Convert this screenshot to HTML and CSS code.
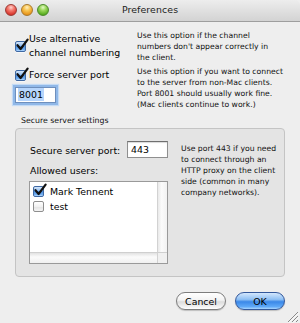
FILE: index.html
```html
<!DOCTYPE html>
<html>
<head>
<meta charset="utf-8">
<title>Preferences</title>
<link rel="stylesheet" href="styles.css">
</head>
<body>
<div class="window">
  <div class="titlebar">
    <div class="lights">
      <span class="light red"></span>
      <span class="light yellow"></span>
      <span class="light green"></span>
    </div>
    <div class="title">Preferences</div>
    <div class="spacer"></div>
  </div>

  <div class="content">
    <div class="option">
      <div class="check-label multi">
        <span class="cb checked"><svg class="tick" viewBox="0 0 14 14" width="14" height="14"><path d="M2.5 7.2 L5.6 11 L12.6 1.6" fill="none" stroke="#111" stroke-width="2.2" stroke-linecap="round" stroke-linejoin="round"/></svg></span>
        <span class="label">Use alternative<br>channel numbering</span>
      </div>
      <p class="desc">Use this option if the channel<br>numbers don't appear correctly in<br>the client.</p>
    </div>

    <div class="option option2">
      <div class="left">
        <div class="check-label">
          <span class="cb checked"><svg class="tick" viewBox="0 0 14 14" width="14" height="14"><path d="M2.5 7.2 L5.6 11 L12.6 1.6" fill="none" stroke="#111" stroke-width="2.2" stroke-linecap="round" stroke-linejoin="round"/></svg></span>
          <span class="label">Force server port</span>
        </div>
        <div class="field focused"><span class="sel">8001</span></div>
      </div>
      <p class="desc desc2">Use this option if you want to connect<br>to the server from non-Mac clients.<br>Port 8001 should usually work fine.<br>(Mac clients continue to work.)</p>
    </div>

    <div class="group-label">Secure server settings</div>
    <div class="group">
      <div class="group-left">
        <div class="port-row">
          <span class="port-label">Secure server port:</span>
          <div class="field port">443</div>
        </div>
        <div class="users-label">Allowed users:</div>
        <div class="list">
          <div class="list-body">
            <div class="item">
              <span class="cb checked"><svg class="tick" viewBox="0 0 14 14" width="14" height="14"><path d="M2.5 7.2 L5.6 11 L12.6 1.6" fill="none" stroke="#111" stroke-width="2.2" stroke-linecap="round" stroke-linejoin="round"/></svg></span>
              <span>Mark Tennent</span>
            </div>
            <div class="item">
              <span class="cb"></span>
              <span>test</span>
            </div>
          </div>
          <div class="vscroll"></div>
          <div class="hscroll"></div>
          <div class="corner"></div>
        </div>
      </div>
      <p class="desc group-desc">Use port 443 if you need<br>to connect through an<br>HTTP proxy on the client<br>side (common in many<br>company networks).</p>
    </div>

    <div class="buttons">
      <button class="btn">Cancel</button>
      <button class="btn default">OK</button>
    </div>
  </div>

  <svg class="grip" viewBox="0 0 14 14" width="14" height="14">
    <path d="M13 3 L3 13 M13 7 L7 13 M13 11 L11 13" stroke="#8a8a8a" stroke-width="1"/>
    <path d="M13.8 3.8 L3.8 13.8 M13.8 7.8 L7.8 13.8" stroke="#ffffff" stroke-width="0.8"/>
  </svg>
</div>
</body>
</html>
```

FILE: styles.css
```css
* { box-sizing: border-box; }

html, body {
  margin: 0;
  padding: 0;
}

body {
  width: 300px;
  height: 323px;
  background: #eeeeee;
  font-family: "DejaVu Sans", "Liberation Sans", sans-serif;
  color: #000;
  overflow: hidden;
}

.window {
  position: relative;
  width: 300px;
  height: 323px;
  background: #eeeeee;
}

/* Title bar */
.titlebar {
  height: 22px;
  display: grid;
  grid-template-columns: 1fr auto 1fr;
  align-items: center;
  background: linear-gradient(#ededed, #e0e0e0 50%, #d3d3d3);
  border-bottom: 1px solid #9e9e9e;
  border-radius: 5px 5px 0 0;
}

.lights {
  display: flex;
  gap: 4px;
  padding-left: 5px;
  margin-top: -2px;
}

.light {
  width: 12px;
  height: 12px;
  border-radius: 50%;
  display: block;
}

.light.red {
  background: radial-gradient(circle at 50% 25%, #ffd2cc 0, #f47a6f 35%, #d9392f 75%, #b42a22 100%);
  border: 1px solid #9c3b35;
}
.light.yellow {
  background: radial-gradient(circle at 50% 25%, #fff0c4 0, #f8c552 35%, #e8961d 75%, #c97a10 100%);
  border: 1px solid #a8792e;
}
.light.green {
  background: radial-gradient(circle at 50% 25%, #e4f9c8 0, #9ad75a 35%, #5bae22 75%, #3f8d14 100%);
  border: 1px solid #4c8a2c;
}

.title {
  font-size: 9.4px;
  color: #222;
  margin-top: -2px;
  letter-spacing: 0.1px;
}

/* Content */
.content {
  padding: 0 15px;
}

.option {
  display: grid;
  grid-template-columns: 122px 1fr;
  margin-top: 7px;
}

.option2 {
  margin-top: 0;
}

.option2 .left {
  padding-top: 5px;
}

.check-label {
  display: flex;
  align-items: flex-start;
  gap: 3px;
}

.check-label.multi {
  align-items: center;
}

.check-label.multi .cb {
  margin-top: 0;
}

.label {
  font-size: 9.4px;
  line-height: 14px;
}

.cb {
  position: relative;
  flex: none;
  width: 11px;
  height: 11px;
  margin-top: 2px;
  border: 1px solid #8e8e8e;
  border-radius: 2px;
  background: linear-gradient(#ffffff, #f1f1f1 50%, #e2e2e2 51%, #f4f4f4);
  box-shadow: 0 1px 0 rgba(255,255,255,0.6);
}

.cb.checked {
  border-color: #3f69a3;
  background: linear-gradient(#d5e6fb, #8cbcf1 45%, #4e92e4 50%, #74b0f2 85%, #b9dcff);
}

.tick {
  position: absolute;
  left: -1px;
  top: -4px;
}

.desc {
  margin: 0;
  font-size: 7.7px;
  line-height: 11px;
  color: #111;
  padding-top: 1px;
  white-space: nowrap;
}

.desc2 {
  padding-top: 3px;
}

/* Fields */
.field {
  width: 41px;
  height: 16px;
  background: #fff;
  border: 1px solid #8f8f8f;
  border-top-color: #6f6f6f;
  box-shadow: inset 0 1px 1px rgba(0,0,0,0.15);
  font-size: 9.4px;
  line-height: 14px;
  padding-left: 3px;
}

.field.focused {
  margin-top: 5px;
  margin-left: 0;
  box-shadow: 0 0 0 2px #90b8e8, 0 0 1px 3px #c4dbf5;
  border-color: #6e8fbd;
}

.sel {
  background: #b6d5fc;
  display: inline-block;
  line-height: 13px;
  padding: 0 1px;
  margin-left: -1px;
}

/* Group box */
.group-label {
  font-size: 7.8px;
  line-height: 10px;
  margin-top: 6px;
  padding-left: 6px;
  color: #111;
}

.group {
  margin-top: 2px;
  height: 149px;
  display: grid;
  grid-template-columns: 139px 1fr;
  column-gap: 13px;
  padding: 12px 2px 13px 13px;
  background: #e4e4e4;
  border: 1px solid #c4c4c4;
  border-radius: 4px;
}

.group-left {
  display: flex;
  flex-direction: column;
}

.port-row {
  display: flex;
  align-items: center;
  height: 17px;
}

.port-label {
  width: 98px;
  padding-left: 1px;
  font-size: 9.4px;
  padding-top: 2px;
}

.field.port {
  height: 17px;
  line-height: 15px;
}

.users-label {
  font-size: 9.4px;
  line-height: 14px;
  margin-top: 6px;
  padding-left: 1px;
}

.list {
  margin-top: 3px;
  height: 83px;
  display: grid;
  grid-template-columns: 1fr 10px;
  grid-template-rows: 1fr 11px;
  border: 1px solid #9a9a9a;
  background: #fff;
}

.list-body {
  padding: 2px 0 0 3px;
  background: #fff;
}

.item {
  display: flex;
  align-items: center;
  gap: 6px;
  font-size: 9.4px;
  line-height: 13px;
  height: 15px;
}

.item .cb {
  margin-top: 0;
}

.vscroll {
  background: linear-gradient(90deg, #e9e9e9, #fbfbfb 40%, #f2f2f2);
  border-left: 1px solid #d2d2d2;
}

.hscroll {
  background: linear-gradient(#e2e2e2, #fbfbfb 40%, #f0f0f0);
  border-top: 1px solid #cfcfcf;
}

.corner {
  background: #f0f0f0;
  border-top: 1px solid #cfcfcf;
  border-left: 1px solid #d2d2d2;
}

.group-desc {
  padding-top: 2px;
}

/* Buttons */
.buttons {
  display: flex;
  justify-content: flex-end;
  gap: 9px;
  margin-top: 15px;
}

.btn {
  width: 50px;
  height: 18px;
  border-radius: 9px;
  font-family: "DejaVu Sans", "Liberation Sans", sans-serif;
  font-size: 9.4px;
  line-height: 15px;
  padding: 0;
  color: #000;
  border: 1px solid #7d7d7d;
  background: linear-gradient(#ffffff, #f3f3f3 45%, #dcdcdc 55%, #f6f6f6 90%, #ffffff);
  box-shadow: 0 1px 1px rgba(0,0,0,0.2);
}

.btn.default {
  border-color: #33589b;
  background: linear-gradient(#d3e7fd, #8fc0f4 40%, #3a88e8 55%, #5ea8f7 85%, #a9d6ff);
}

.grip {
  position: absolute;
  right: 1px;
  bottom: 0;
}
```
